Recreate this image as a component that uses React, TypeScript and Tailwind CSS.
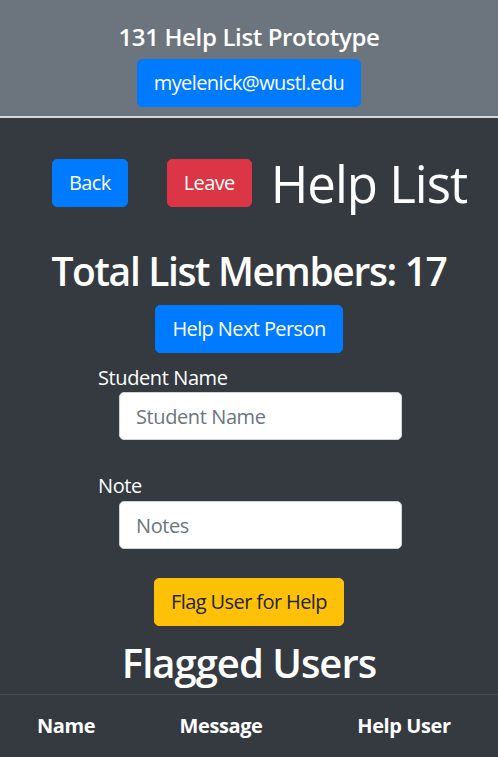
const btn = 'text-[20px] leading-[30px] px-4 py-2 rounded-[5px] border tracking-[-0.03em]';

export default function App() {
  return (
    <div className="min-h-screen bg-[#343a40] text-white font-['Open_Sans',sans-serif]">
      <header className="bg-[#6c757d] pt-[22px] pb-[9px] border-b-2 border-[#d6d8db] flex flex-col items-center">
        <h4 className="text-[24px] leading-[29px] font-semibold mb-[8px] tracking-[-0.015em]">131 Help List Prototype</h4>
        <button className={`${btn} bg-[#007bff] border-[#007bff] text-white`}>myelenick@wustl.edu</button>
      </header>

      <div className="flex items-center mt-[35px]">
        <button className={`${btn} ml-[52px] bg-[#007bff] border-[#007bff]`}>Back</button>
        <button className={`${btn} ml-[39px] bg-[#dc3545] border-[#dc3545]`}>Leave</button>
        <h1 className="ml-[19px] text-[51px] leading-[60px] font-medium tracking-[-0.02em]">Help List</h1>
      </div>

      <div className="flex flex-col items-center mt-[34px]">
        <h1 className="text-[39px] leading-[48px] font-semibold mb-[10px] tracking-[-0.035em]">Total List Members: 17</h1>
        <button className={`${btn} bg-[#007bff] border-[#007bff]`}>Help Next Person</button>
      </div>

      <form className="pl-[98px] mt-[13px]">
        <label className="block text-[20px] leading-[24px] tracking-[-0.02em]">Student Name</label>
        <input
          placeholder="Student Name"
          className="block mt-[2px] ml-[21px] w-[283px] h-[48px] px-4 text-[20px] tracking-[-0.02em] text-[#495057] bg-white rounded-[5px] border border-[#ced4da] placeholder:text-[#6c757d]"
        />
        <label className="block mt-[34px] text-[20px] leading-[24px] tracking-[-0.02em]">Note</label>
        <input
          placeholder="Notes"
          className="block mt-[3px] ml-[21px] w-[283px] h-[48px] px-4 text-[20px] tracking-[-0.02em] text-[#495057] bg-white rounded-[5px] border border-[#ced4da] placeholder:text-[#6c757d]"
        />
      </form>

      <div className="flex flex-col items-center mt-[29px]">
        <button className={`${btn} bg-[#ffc107] border-[#ffc107] text-[#212529]`}>Flag User for Help</button>
        <h1 className="mt-[13px] text-[40px] leading-[48px] font-semibold mb-[7px] tracking-[-0.025em]">Flagged Users</h1>
      </div>

      <div className="border-t border-[#454d55] grid grid-cols-[132px_178px_188px] pt-[16px] pb-3 text-[20px] leading-[30px] font-bold text-center tracking-[-0.02em]">
        <div>Name</div>
        <div>Message</div>
        <div>Help User</div>
      </div>
    </div>
  );
}
